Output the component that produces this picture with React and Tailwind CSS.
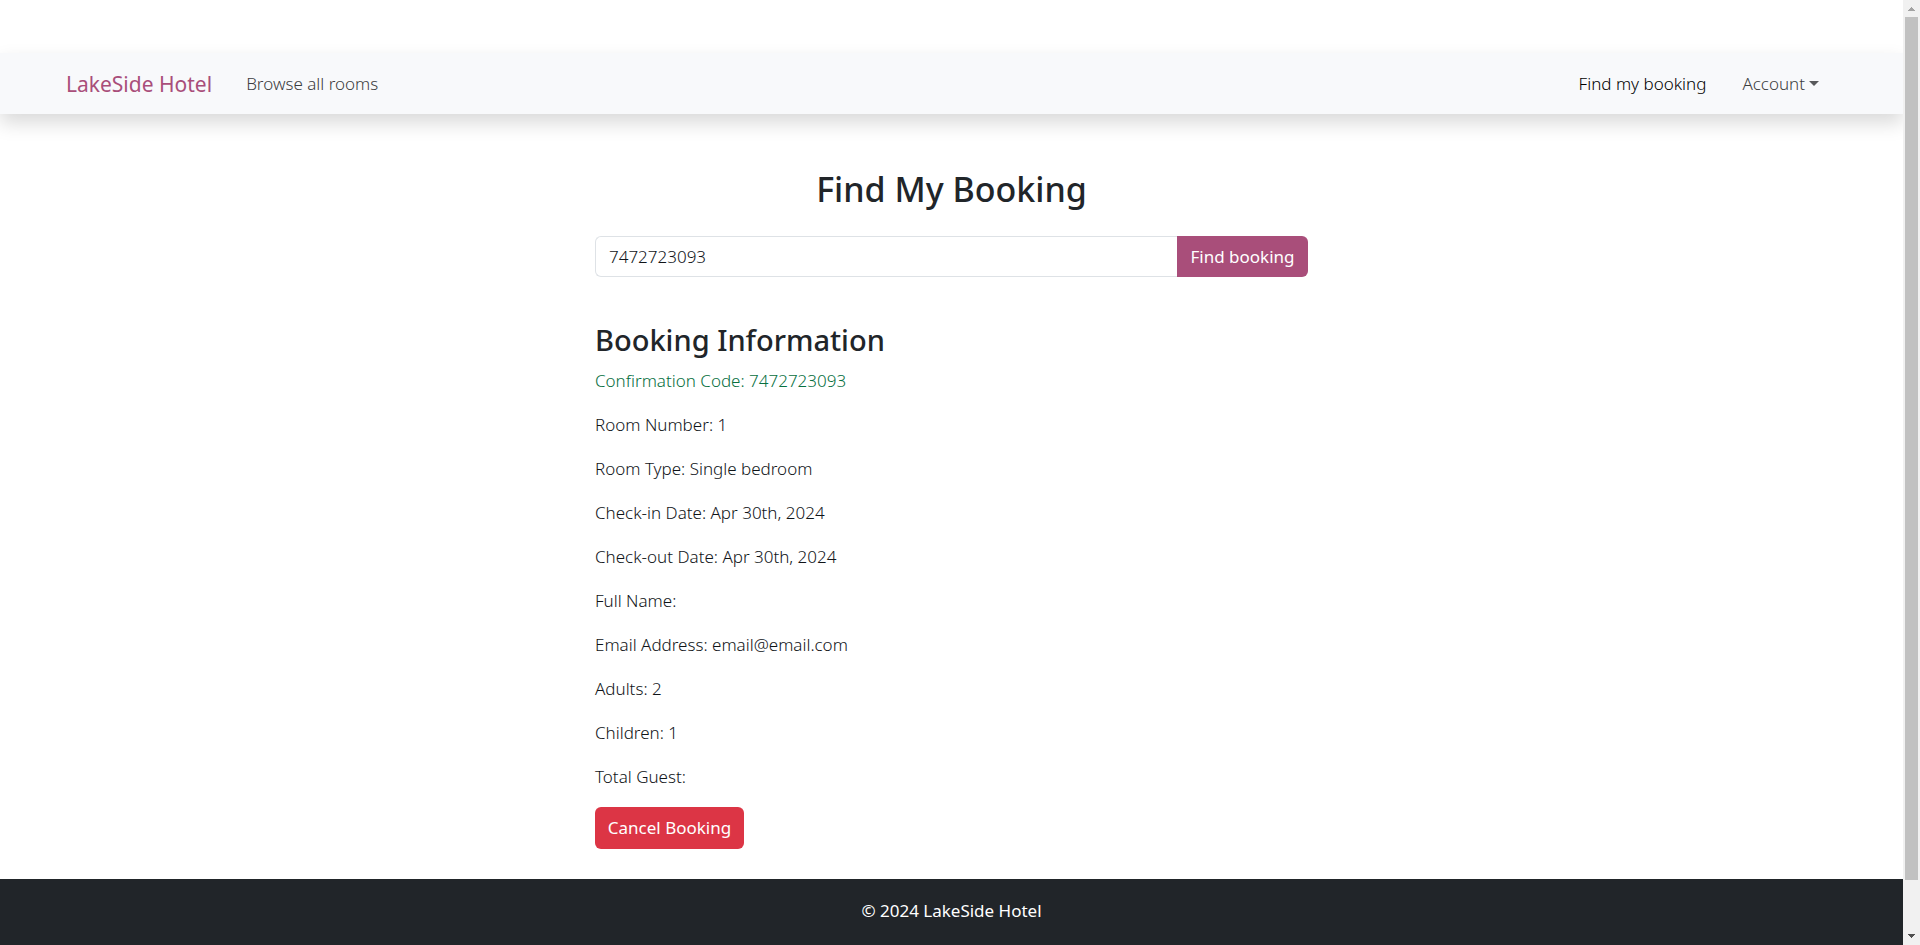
import { useState } from "react";

const details = [
  ["Room Number", "1"],
  ["Room Type", "Single bedroom"],
  ["Check-in Date", "Apr 30th, 2024"],
  ["Check-out Date", "Apr 30th, 2024"],
  ["Full Name", ""],
  ["Email Address", "email@email.com"],
  ["Adults", "2"],
  ["Children", "1"],
  ["Total Guest", ""],
];

function NavBar() {
  return (
    <nav className="mt-[53px] flex h-[61px] items-center gap-[34px] bg-[#f8f9fb] pr-[84px] pl-[66px] shadow-[0_9px_18px_rgba(0,0,0,0.15)]">
      <a href="#home" className="text-[21px] leading-8 font-normal text-[#a94e7a]">
        LakeSide Hotel
      </a>
      <a href="#rooms" className="text-[#3c3d3f]">
        Browse all rooms
      </a>
      <div className="ml-auto flex items-center gap-9">
        <a href="#find-booking" className="text-black">
          Find my booking
        </a>
        <button type="button" className="flex items-center gap-1 text-[#3c3d3f]">
          Account
          <svg viewBox="0 0 10 5" className="h-[5px] w-[10px]" aria-hidden="true">
            <path d="M0 0h10L5 5z" fill="#58595b" />
          </svg>
        </button>
      </div>
    </nav>
  );
}

function FindBookingForm() {
  const [code, setCode] = useState("7472723093");
  return (
    <form className="mt-[26px] flex h-[41px]" onSubmit={(e) => e.preventDefault()}>
      <input
        type="text"
        aria-label="Confirmation code"
        value={code}
        onChange={(e) => setCode(e.target.value)}
        className="min-w-0 flex-1 rounded-l-md border border-r-0 border-[#dee2e6] px-[13px] outline-none"
      />
      <button type="submit" className="w-[131px] rounded-r-md bg-[#a94e7a] font-normal text-white">
        Find booking
      </button>
    </form>
  );
}

function ScrollRail() {
  return (
    <div className="flex w-[17px] shrink-0 flex-col items-center bg-[#f1f1f1]" aria-hidden="true">
      <svg viewBox="0 0 17 17" className="h-[17px] w-[17px] shrink-0">
        <path d="M5 11h7v-1h-1v-1h-1v-1h-1v-1h-1v1h-1v1h-1v1h-1z" fill="#a3a3a3" />
      </svg>
      <div className="w-[13px] flex-1 bg-[#c1c1c1]" />
      <div className="h-12" />
      <svg viewBox="0 0 17 17" className="h-[17px] w-[17px] shrink-0">
        <path d="M5 6h7v1h-1v1h-1v1h-1v1h-1v-1h-1v-1h-1v-1h-1z" fill="#505050" />
      </svg>
    </div>
  );
}

export default function App() {
  return (
    <div className="flex min-h-screen bg-white font-['Noto_Sans','Open_Sans',sans-serif] text-[17px] leading-[26px] font-light text-[#101418]">
      <div className="flex min-w-0 flex-1 flex-col">
        <NavBar />
        <main className="mx-auto w-full max-w-[713px] flex-1 pt-[54px] pb-[30px]">
          <h2 className="text-center text-[34px] leading-[42px] font-medium text-[#212529]">
            Find My Booking
          </h2>
          <FindBookingForm />
          <section className="mt-[45px]">
            <h3 className="mb-[10px] text-[29px] leading-9 font-medium text-[#212529]">
              Booking Information
            </h3>
            <div className="flex flex-col gap-[18px]">
              <p className="text-[#07703f]">Confirmation Code: 7472723093</p>
              {details.map(([label, value]) => (
                <p key={label}>
                  {label}: {value}
                </p>
              ))}
            </div>
            <button
              type="button"
              className="mt-[17px] h-[42px] w-[149px] rounded-md bg-[#dc3545] font-normal text-white"
            >
              Cancel Booking
            </button>
          </section>
        </main>
        <footer className="bg-[#212529] pt-[19px] pb-[21px] text-center font-normal text-white">
          © 2024 LakeSide Hotel
        </footer>
      </div>
      <ScrollRail />
    </div>
  );
}
